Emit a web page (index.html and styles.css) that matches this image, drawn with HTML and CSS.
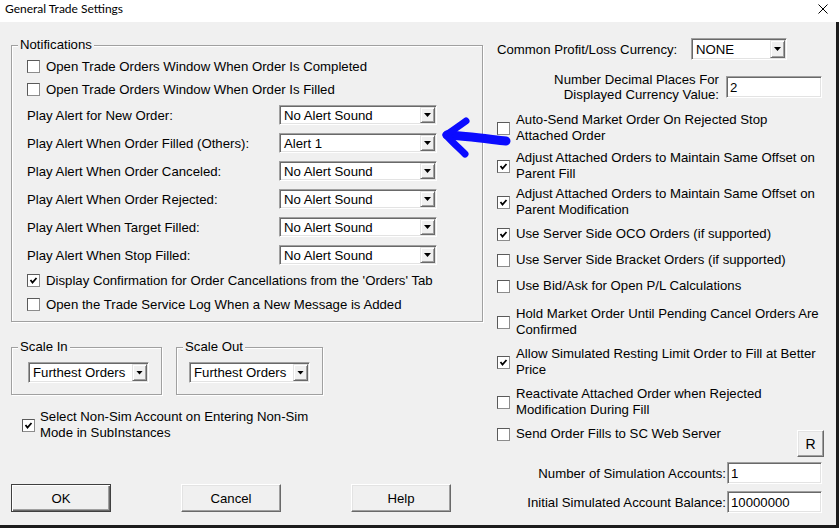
FILE: index.html
```html
<!DOCTYPE html>
<html>
<head>
<meta charset="utf-8">
<title>General Trade Settings</title>
<link rel="stylesheet" href="styles.css">
</head>
<body>
<div class="titlebar">
  <span class="title">General Trade Settings</span>
  <svg class="close" viewBox="0 0 10 10" width="10" height="10"><path d="M0.5 0.5 L9.5 9.5 M9.5 0.5 L0.5 9.5" stroke="#000" stroke-width="1" fill="none"/></svg>
</div>
<div class="client">
  <div class="left">
    <div class="group notif">
      <span class="group-title">Notifications</span>
      <div class="cb-row r23"><span class="cb"></span><span>Open Trade Orders Window When Order Is Completed</span></div>
      <div class="cb-row r23"><span class="cb"></span><span>Open Trade Orders Window When Order Is Filled</span></div>
      <div class="sel-row"><span class="sel-label">Play Alert for New Order:</span><div class="combo w158"><span class="combo-text">No Alert Sound</span><span class="combo-btn"><i class="tri"></i></span></div></div>
      <div class="sel-row"><span class="sel-label">Play Alert When Order Filled (Others):</span><div class="combo w158"><span class="combo-text">Alert 1</span><span class="combo-btn"><i class="tri"></i></span></div></div>
      <div class="sel-row"><span class="sel-label">Play Alert When Order Canceled:</span><div class="combo w158"><span class="combo-text">No Alert Sound</span><span class="combo-btn"><i class="tri"></i></span></div></div>
      <div class="sel-row"><span class="sel-label">Play Alert When Order Rejected:</span><div class="combo w158"><span class="combo-text">No Alert Sound</span><span class="combo-btn"><i class="tri"></i></span></div></div>
      <div class="sel-row"><span class="sel-label">Play Alert When Target Filled:</span><div class="combo w158"><span class="combo-text">No Alert Sound</span><span class="combo-btn"><i class="tri"></i></span></div></div>
      <div class="sel-row"><span class="sel-label">Play Alert When Stop Filled:</span><div class="combo w158"><span class="combo-text">No Alert Sound</span><span class="combo-btn"><i class="tri"></i></span></div></div>
      <div class="cb-row r23"><span class="cb checked"><svg viewBox="0 0 11 11" width="11" height="11"><path d="M2.5 5 L4.5 7.5 L8.5 3" stroke="#000" stroke-width="1.8" fill="none"/></svg></span><span>Display Confirmation for Order Cancellations from the 'Orders' Tab</span></div>
      <div class="cb-row r24"><span class="cb"></span><span>Open the Trade Service Log When a New Message is Added</span></div>
    </div>

    <div class="scale-row">
      <div class="group scale-in">
        <span class="group-title">Scale In</span>
        <div class="combo w121"><span class="combo-text">Furthest Orders</span><span class="combo-btn"><i class="tri"></i></span></div>
      </div>
      <div class="group scale-out">
        <span class="group-title">Scale Out</span>
        <div class="combo w121"><span class="combo-text">Furthest Orders</span><span class="combo-btn"><i class="tri"></i></span></div>
      </div>
    </div>

    <div class="cb-row nonsim"><span class="cb checked"><svg viewBox="0 0 11 11" width="11" height="11"><path d="M2.5 5 L4.5 7.5 L8.5 3" stroke="#000" stroke-width="1.8" fill="none"/></svg></span><span class="two">Select Non-Sim Account on Entering Non-Sim<br>Mode in SubInstances</span></div>

    <div class="buttons">
      <button class="btn default">OK</button>
      <button class="btn">Cancel</button>
      <button class="btn">Help</button>
    </div>
  </div>

  <div class="right">
    <div class="cur-row">
      <span class="cur-label">Common Profit/Loss Currency:</span>
      <div class="combo w96"><span class="combo-text">NONE</span><span class="combo-btn"><i class="tri"></i></span></div>
    </div>
    <div class="dec-row">
      <span class="dec-label">Number Decimal Places For<br>Displayed Currency Value:</span>
      <span class="edit w96">2</span>
    </div>

    <div class="cb-item m13"><span class="cb"></span><span class="txt">Auto-Send Market Order On Rejected Stop<br>Attached Order</span></div>
    <div class="cb-item m6"><span class="cb checked"><svg viewBox="0 0 11 11" width="11" height="11"><path d="M2.5 5 L4.5 7.5 L8.5 3" stroke="#000" stroke-width="1.8" fill="none"/></svg></span><span class="txt">Adjust Attached Orders to Maintain Same Offset on<br>Parent Fill</span></div>
    <div class="cb-item m4"><span class="cb checked"><svg viewBox="0 0 11 11" width="11" height="11"><path d="M2.5 5 L4.5 7.5 L8.5 3" stroke="#000" stroke-width="1.8" fill="none"/></svg></span><span class="txt">Adjust Attached Orders to Maintain Same Offset on<br>Parent Modification</span></div>
    <div class="cb-item m8"><span class="cb checked"><svg viewBox="0 0 11 11" width="11" height="11"><path d="M2.5 5 L4.5 7.5 L8.5 3" stroke="#000" stroke-width="1.8" fill="none"/></svg></span><span class="txt">Use Server Side OCO Orders (if supported)</span></div>
    <div class="cb-item m10"><span class="cb"></span><span class="txt">Use Server Side Bracket Orders (if supported)</span></div>
    <div class="cb-item m10"><span class="cb"></span><span class="txt">Use Bid/Ask for Open P/L Calculations</span></div>
    <div class="cb-item m12"><span class="cb"></span><span class="txt">Hold Market Order Until Pending Cancel Orders Are<br>Confirmed</span></div>
    <div class="cb-item m8"><span class="cb checked"><svg viewBox="0 0 11 11" width="11" height="11"><path d="M2.5 5 L4.5 7.5 L8.5 3" stroke="#000" stroke-width="1.8" fill="none"/></svg></span><span class="txt">Allow Simulated Resting Limit Order to Fill at Better<br>Price</span></div>
    <div class="cb-item m8"><span class="cb"></span><span class="txt">Reactivate Attached Order when Rejected<br>Modification During Fill</span></div>
    <div class="send-row m8">
      <div class="cb-item"><span class="cb"></span><span class="txt">Send Order Fills to SC Web Server</span></div>
      <button class="btn rbtn">R</button>
    </div>
    <div class="num-row first">
      <span class="num-label">Number of Simulation Accounts:</span>
      <span class="edit w95">1</span>
    </div>
    <div class="num-row">
      <span class="num-label">Initial Simulated Account Balance:</span>
      <span class="edit w95">10000000</span>
    </div>
  </div>

  <svg class="arrow" viewBox="0 0 80 52" width="80" height="52">
    <path d="M70 29 C52 27 30 24 11 23" stroke="#0b0bff" stroke-width="9" stroke-linecap="round" fill="none"/>
    <path d="M30 9 C23 14 16 19 10 23 C16 30 23 36 29 42" stroke="#0b0bff" stroke-width="7" stroke-linecap="round" stroke-linejoin="round" fill="none"/>
  </svg>
</div>
</body>
</html>
```

FILE: styles.css
```css
* { box-sizing: border-box; }
html, body { margin: 0; padding: 0; }
body {
  width: 839px;
  height: 528px;
  overflow: hidden;
  background: #f0f0f0;
  font-family: "Liberation Sans", Arial, sans-serif;
  font-size: 13.2px;
  color: #000;
}
.titlebar {
  height: 22px;
  background: #fff;
  display: flex;
  align-items: flex-start;
  justify-content: space-between;
  padding: 0 11px 0 5px;
}
.title {
  font-family: Lato, "Noto Sans", sans-serif;
  font-size: 12px;
  line-height: 17px;
}
.close { margin-top: 4px; display: block; }

.client {
  position: relative;
  display: flex;
  height: 506px;
  border-right: 3px solid #1c1c1c;
  border-bottom: 3px solid #1c1c1c;
}
.left {
  width: 483px;
  flex: none;
  padding: 23px 0 0 11px;
  display: flex;
  flex-direction: column;
}
.group {
  position: relative;
  border: 1px solid #a0a0a0;
  box-shadow: 1px 1px 0 #fff, inset 1px 1px 0 #fff;
}
.group-title {
  position: absolute;
  top: -9px;
  left: 6px;
  padding: 0 2px;
  background: #f0f0f0;
  line-height: 16px;
}
.notif {
  width: 472px;
  padding: 9px 0 5px 15px;
}
.cb-row { display: flex; align-items: center; gap: 6px; }
.r23 { height: 23px; }
.r24 { height: 24px; }
.cb {
  width: 13px;
  height: 13px;
  flex: none;
  background: #fff;
  border: 1px solid #8c8c8c;
  border-top-color: #5a5a5a;
  border-left-color: #5a5a5a;
  display: flex;
  align-items: center;
  justify-content: center;
}
.cb svg { display: block; }
.sel-row { height: 28px; display: flex; align-items: center; }
.sel-label { width: 252px; flex: none; }

.combo {
  height: 20px;
  display: flex;
  align-items: center;
  background: #fff;
  border: 1px solid;
  border-color: #a0a0a0 #fff #fff #a0a0a0;
  box-shadow: inset 1px 1px 0 #696969, inset -1px -1px 0 #e3e3e3;
  padding: 1px;
}
.w158 { width: 158px; }
.w121 { width: 121px; height: 21px; }
.w96 { width: 96px; height: 22px; }
.w95 { width: 95px; }
.combo-text { flex: 1; padding-left: 3px; padding-top: 1px; line-height: 16px; white-space: nowrap; overflow: hidden; }
.combo-btn {
  width: 15px;
  height: 100%;
  flex: none;
  background: #f0f0f0;
  border: 1px solid;
  border-color: #e3e3e3 #696969 #696969 #e3e3e3;
  box-shadow: inset 1px 1px 0 #fff, inset -1px -1px 0 #a0a0a0;
  display: flex;
  align-items: center;
  justify-content: center;
}
.tri {
  display: block;
  width: 7px;
  height: 4px;
  background: #000;
  clip-path: polygon(0 0, 100% 0, 50% 100%);
}

.scale-row { display: flex; gap: 14px; margin-top: 25px; }
.scale-in { width: 151px; padding: 14px 0 11px 16px; }
.scale-out { width: 147px; padding: 14px 0 11px 12px; }

.nonsim { margin-top: 14px; padding-left: 11px; gap: 5px; }
.two { line-height: 16px; }

.buttons { display: flex; gap: 70px; margin-top: 43px; }
.btn {
  width: 100px;
  height: 28px;
  font-family: "Liberation Sans", Arial, sans-serif;
  font-size: 13.2px;
  color: #000;
  background: #f0f0f0;
  border: 1px solid;
  border-color: #fff #696969 #696969 #fff;
  box-shadow: inset -1px -1px 0 #a0a0a0, inset 1px 1px 0 #e3e3e3;
  padding: 0;
}
.btn.default {
  border-color: #404040;
  box-shadow: inset 1px 1px 0 #fff, inset -1px -1px 0 #696969, inset -2px -2px 0 #a0a0a0;
}

.right {
  flex: 1;
  padding: 16px 12px 0 14px;
  display: flex;
  flex-direction: column;
}
.cur-row { display: flex; align-items: center; height: 22px; }
.cur-label { width: 194px; flex: none; }
.dec-row {
  display: flex;
  justify-content: flex-end;
  align-items: flex-start;
  margin-top: 11px;
  height: 28px;
  padding-right: 2px;
  gap: 7px;
}
.dec-label { text-align: right; line-height: 15px; padding-top: 1px; }
.dec-row .edit { margin-top: 5px; }

.edit {
  height: 22px;
  display: flex;
  align-items: center;
  background: #fff;
  border: 1px solid;
  border-color: #a0a0a0 #fff #fff #a0a0a0;
  box-shadow: inset 1px 1px 0 #696969, inset -1px -1px 0 #e3e3e3;
  padding-left: 3px;
}

.cb-item { display: flex; align-items: center; gap: 6px; }
.txt { line-height: 16px; }
.m4 { margin-top: 4px; }
.m6 { margin-top: 6px; }
.m8 { margin-top: 8px; }
.m10 { margin-top: 10px; }
.m12 { margin-top: 12px; }
.m13 { margin-top: 13px; }

.send-row { display: flex; align-items: flex-start; }
.rbtn { width: 27px; height: 27px; margin-left: auto; margin-top: 4px; font-size: 14px; }

.num-row {
  display: flex;
  justify-content: flex-end;
  align-items: center;
  gap: 1px;
  padding-right: 2px;
  margin-top: 7px;
}
.num-row.first { margin-top: 5px; }

.arrow {
  position: absolute;
  left: 436px;
  top: 90px;
}
```
